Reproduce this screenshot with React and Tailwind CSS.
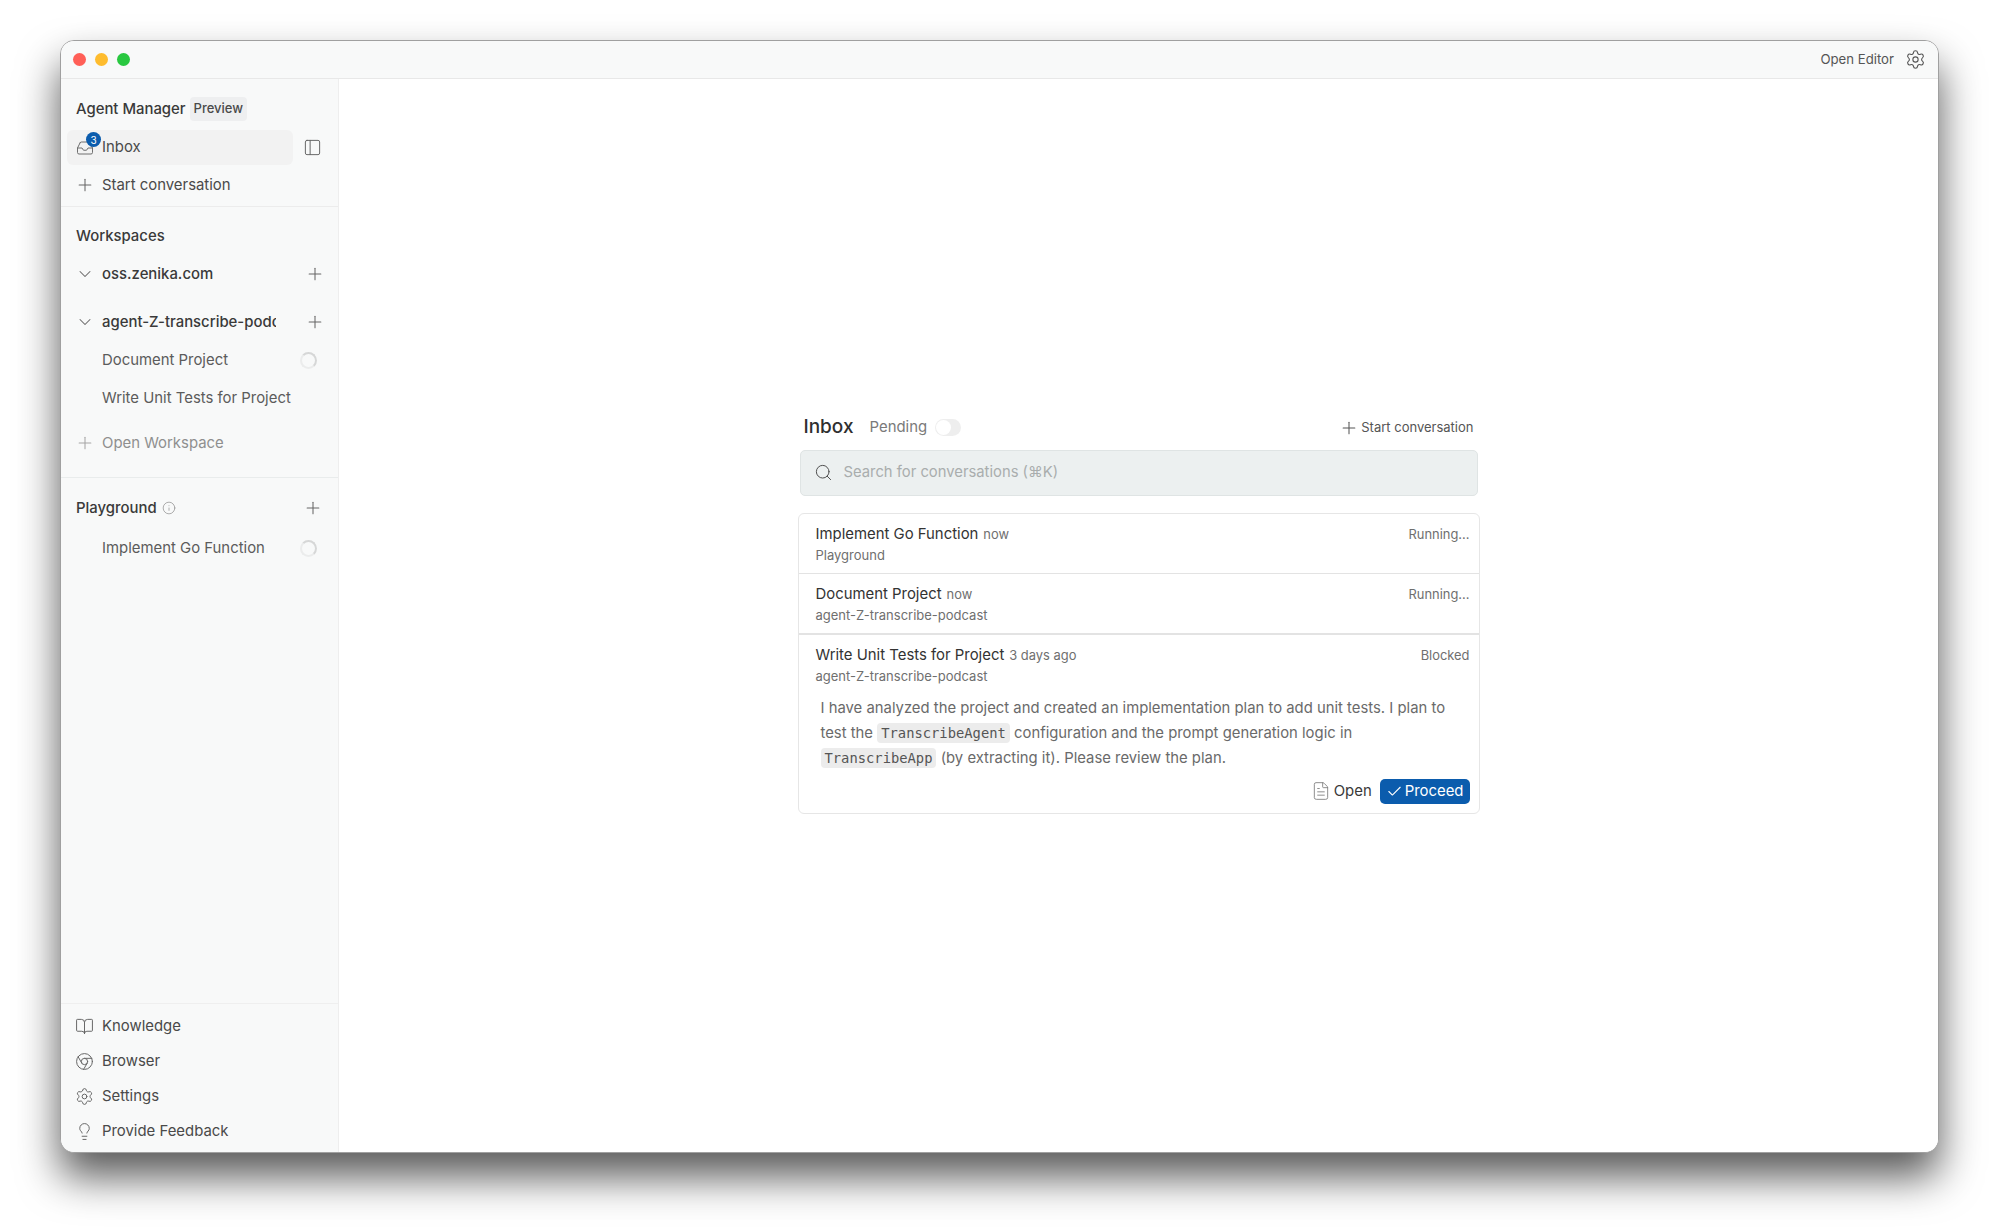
import { BookOpen, Check, ChevronDown, Chrome, FileText, Inbox, Info, Lightbulb, PanelLeft, Plus, Search, Settings } from "lucide-react";

function Spinner() {
  return <span className="w-[17px] h-[17px] rounded-full border-2 border-[#d6d7d7] border-l-[#ebecec] border-b-[#ebecec] shrink-0" />;
}

function WorkspaceRow({ name, className }) {
  return (
    <div className={`flex items-center h-[24px] pl-[14px] pr-[13px] ${className}`}>
      <ChevronDown size={20} strokeWidth={1.25} className="text-[#666] shrink-0" />
      <span className="ml-[7px] w-[174px] overflow-hidden whitespace-nowrap text-[14.9px] font-medium text-[#3a3a3a]">{name}</span>
      <Plus size={20} strokeWidth={1.25} className="ml-auto text-[#666]" />
    </div>
  );
}

function FooterLink({ icon: Icon, label }) {
  return (
    <div className="flex items-center h-[35px] pl-[14px] text-[14.9px] text-[#4a4a4a]">
      <Icon size={19} strokeWidth={1.25} className="text-[#666] shrink-0" />
      <span className="ml-[8px]">{label}</span>
    </div>
  );
}

function Sidebar() {
  return (
    <aside className="w-[278px] shrink-0 flex flex-col bg-[#f8f9f9] border-r border-[#eeeeee]">
      <div className="pt-[12px] h-[128px] border-b border-[#ececec]">
        <div className="flex items-center pl-[15px] h-[24px] mt-[6px]">
          <span className="text-[14.9px] font-medium text-[#3a3a3a]">Agent Manager</span>
          <span className="ml-[4px] px-[4px] h-[24px] flex items-center rounded-[4px] bg-[#eeeff0] text-[13px] font-medium text-[#4a4a4a]">Preview</span>
        </div>
        <div className="flex items-center mt-[9px] pl-[6px]">
          <div className="relative flex items-center w-[226px] h-[35px] pl-[9px] rounded-[6px] bg-[#f2f2f2]">
            <Inbox size={18} strokeWidth={1.25} className="text-[#666]" />
            <span className="absolute left-[19px] top-[2px] w-[15px] h-[15px] rounded-full bg-[#0b5cad] flex items-center justify-center text-[10px] leading-none text-white">3</span>
            <span className="ml-[8px] text-[14.9px] text-[#4a4a4a]">Inbox</span>
          </div>
          <PanelLeft size={19} strokeWidth={1.25} className="ml-[10px] text-[#666]" />
        </div>
        <div className="flex items-center h-[24px] mt-[8px] pl-[14px] text-[14.9px] text-[#4a4a4a]">
          <Plus size={20} strokeWidth={1.25} className="text-[#666]" />
          <span className="ml-[7px]">Start conversation</span>
        </div>
      </div>

      <div className="h-[271px] border-b border-[#e9ecec] pt-[17px]">
        <div className="pl-[15px] h-[24px] flex items-center text-[14.9px] font-medium text-[#3a3a3a]">Workspaces</div>
        <WorkspaceRow name="oss.zenika.com" className="mt-[14px]" />
        <WorkspaceRow name="agent-Z-transcribe-podcast" className="mt-[24px]" />
        <div className="flex items-center h-[24px] mt-[14px] pl-[41px] pr-[21px] text-[14.9px] text-[#5c5c5c]">
          <span>Document Project</span>
          <span className="ml-auto flex"><Spinner /></span>
        </div>
        <div className="flex items-center h-[24px] mt-[14px] pl-[41px] text-[14.9px] text-[#5c5c5c]">Write Unit Tests for Project</div>
        <div className="flex items-center h-[24px] mt-[21px] pl-[14px] text-[14.9px] text-[#8f8f8f]">
          <Plus size={20} strokeWidth={1.25} className="text-[#a5a5a5]" />
          <span className="ml-[7px]">Open Workspace</span>
        </div>
      </div>

      <div className="flex-1 pt-[18px]">
        <div className="flex items-center h-[24px] pl-[15px] pr-[15px]">
          <span className="text-[14.9px] font-medium text-[#3a3a3a]">Playground</span>
          <Info size={14} strokeWidth={1.25} className="ml-[5px] text-[#8f8f8f]" />
          <Plus size={20} strokeWidth={1.25} className="ml-auto text-[#666]" />
        </div>
        <div className="flex items-center h-[24px] mt-[16px] pl-[41px] pr-[21px] text-[14.9px] text-[#5c5c5c]">
          <span>Implement Go Function</span>
          <span className="ml-auto flex"><Spinner /></span>
        </div>
      </div>

      <div className="border-t border-[#efefef] pt-[5px] h-[149px]">
        <FooterLink icon={BookOpen} label="Knowledge" />
        <FooterLink icon={Chrome} label="Browser" />
        <FooterLink icon={Settings} label="Settings" />
        <FooterLink icon={Lightbulb} label="Provide Feedback" />
      </div>
    </aside>
  );
}

function ConversationHead({ title, time, status, project }) {
  return (
    <>
      <div className="flex items-center h-[22px]">
        <span className="text-[14.9px] text-[#333]">{title}</span>
        <span className="ml-[5px] text-[12.9px] text-[#6f6f6f]">{time}</span>
        <span className="ml-auto text-[12.9px] text-[#6f6f6f]">{status}</span>
      </div>
      <div className="h-[20px] flex items-center text-[13px] text-[#6f6f6f]">{project}</div>
    </>
  );
}

function Code({ children }) {
  return (
    <code className="px-[4px] py-[2px] rounded-[4px] bg-[#ececec] text-[13.8px] text-[#555]" style={{ fontFamily: '"DejaVu Sans Mono", monospace' }}>
      {children}
    </code>
  );
}

function InboxPanel() {
  return (
    <main className="flex-1 flex items-center justify-center bg-white pb-[2px]">
      <div className="w-[682px] flex flex-col">
        <div className="flex items-center h-[24px] pl-[6px] pr-[6px]">
          <span className="text-[19px] font-medium text-[#2f2f2f]">Inbox</span>
          <span className="ml-[16px] text-[14.9px] text-[#7a7a7a]">Pending</span>
          <span className="ml-[8px] w-[26px] h-[17px] rounded-full bg-[#eeeeee] flex items-center pl-[1px]">
            <span className="w-[15px] h-[15px] rounded-full bg-white" />
          </span>
          <Plus size={20} strokeWidth={1.25} className="ml-auto text-[#555]" />
          <span className="ml-[2px] text-[13px] text-[#555]">Start conversation</span>
        </div>
        <div className="mt-[10px] mx-[2px] h-[46px] flex items-center pl-[13px] rounded-[5px] border border-[#dfe4e4] bg-[#ecf0f0]">
          <Search size={19} strokeWidth={1.25} className="text-[#4f4f4f]" />
          <span className="ml-[11px] text-[14.8px] text-[#a9adad]">Search for conversations (⌘K)</span>
        </div>
        <div className="mt-[17px] rounded-[6px] border border-[#e6e6e6]">
          <div className="h-[60px] pl-[17px] pr-[9px] pt-[10px] border-b border-[#e3e3e3]">
            <ConversationHead title="Implement Go Function" time="now" status="Running..." project="Playground" />
          </div>
          <div className="h-[61px] pl-[17px] pr-[9px] pt-[10px] border-b-2 border-[#e3e3e3]">
            <ConversationHead title="Document Project" time="now" status="Running..." project="agent-Z-transcribe-podcast" />
          </div>
          <div className="pl-[17px] pr-[9px] pt-[10px] pb-[9px]">
            <ConversationHead title="Write Unit Tests for Project" time="3 days ago" status="Blocked" project="agent-Z-transcribe-podcast" />
            <p className="mt-[9px] pl-[5px] text-[14.85px] leading-[25px] text-[#6a6a6a]">
              I have analyzed the project and created an implementation plan to add unit tests. I plan to test the{" "}
              <Code>TranscribeAgent</Code> configuration and the prompt generation logic in{" "}
              <Code>TranscribeApp</Code> (by extracting it). Please review the plan.
            </p>
            <div className="mt-[8px] flex items-center justify-end">
              <FileText size={20} strokeWidth={1} className="text-[#777]" />
              <span className="ml-[3px] text-[14.9px] text-[#3a3a3a]">Open</span>
              <span className="ml-[8px] h-[25px] px-[6px] flex items-center rounded-[5px] bg-[#0b5cad] text-[14.9px] text-white">
                <Check size={17} strokeWidth={1.5} />
                <span className="ml-[2px]">Proceed</span>
              </span>
            </div>
          </div>
        </div>
      </div>
    </main>
  );
}

export default function App() {
  return (
    <div className="w-[1999px] h-[1232px] overflow-hidden bg-white pt-[40px] pl-[60px]" style={{ fontFamily: 'Inter, "Liberation Sans", sans-serif' }}>
      <div className="w-[1879px] h-[1113px] flex flex-col rounded-[14px] overflow-hidden border border-[#a0a0a0] bg-white shadow-[0_24px_42px_rgba(0,0,0,0.65)]">
        <header className="h-[38px] shrink-0 flex items-center pl-[12px] pr-[12px] bg-[#f8f9f9] border-b border-[#e8e8e8]">
          <span className="w-[13px] h-[13px] rounded-full bg-[#ff5f57]" />
          <span className="ml-[9px] w-[13px] h-[13px] rounded-full bg-[#febc2e]" />
          <span className="ml-[9px] w-[13px] h-[13px] rounded-full bg-[#28c840]" />
          <span className="ml-auto text-[13.2px] text-[#555]">Open Editor</span>
          <Settings size={21} strokeWidth={1.25} className="ml-[11px] text-[#555]" />
        </header>
        <div className="flex-1 flex min-h-0">
          <Sidebar />
          <InboxPanel />
        </div>
      </div>
    </div>
  );
}
